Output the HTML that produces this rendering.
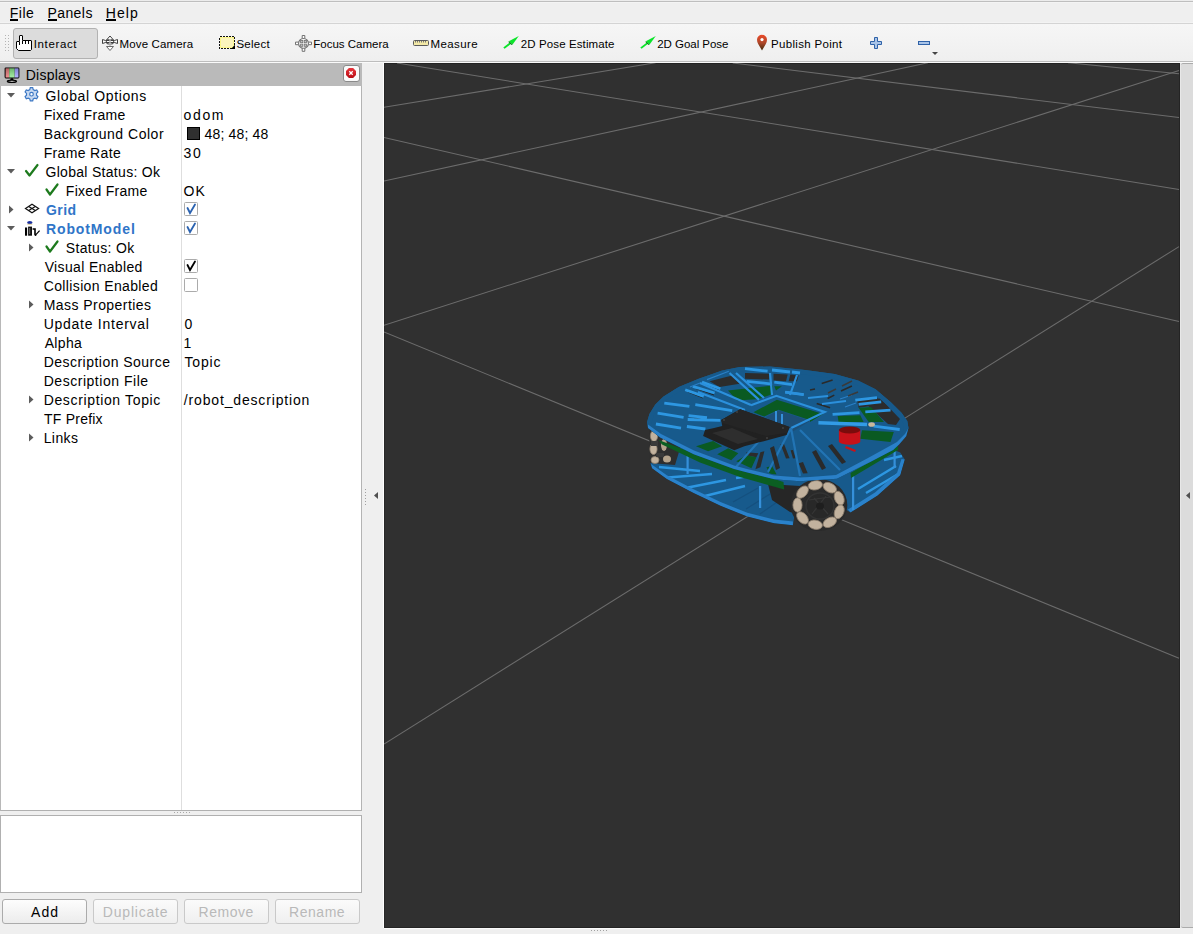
<!DOCTYPE html>
<html><head><meta charset="utf-8"><style>
*{margin:0;padding:0;box-sizing:border-box}
html,body{width:1193px;height:934px;overflow:hidden;background:#efefef;font-family:"Liberation Sans",sans-serif}
.a{position:absolute}
.t{position:absolute;white-space:pre;font-family:"Liberation Sans",sans-serif}
</style></head><body>
<!-- top line -->
<div class=a style="left:0;top:0;width:1193px;height:1px;background:#ececec"></div>
<div class=a style="left:0;top:1px;width:1193px;height:1px;background:#bebebe"></div>
<!-- menu -->
<div class=a style="left:0;top:2px;width:1193px;height:21px;background:#efefef;border-top:1px solid #f4f4f4;border-bottom:1px solid #f3f3f3"></div>
<div class=a style="left:10px;top:19px;width:8px;height:2px;background:#000"></div>
<div class=a style="left:48px;top:19px;width:9px;height:2px;background:#000"></div>
<div class=a style="left:106px;top:19px;width:10px;height:2px;background:#000"></div>
<div class=a style="left:0;top:23px;width:1193px;height:1px;background:#d4d4d4"></div>
<!-- toolbar -->
<div class=a style="left:0;top:24px;width:1193px;height:37px;background:linear-gradient(#f6f6f6,#efefef)"></div>
<div class=a style="left:0;top:61px;width:1193px;height:1px;background:#bdbdbd"></div>
<div class=a style="left:0;top:62px;width:1193px;height:1px;background:#fafafa"></div>
<!-- grip dots -->
<svg class=a style="left:0;top:0" width="20" height="60">
<g fill="#b4b4b4">
<rect x='5' y='35' width='1' height='1'/><rect x='5' y='38' width='1' height='1'/><rect x='5' y='41' width='1' height='1'/><rect x='5' y='44' width='1' height='1'/><rect x='5' y='47' width='1' height='1'/><rect x='5' y='50' width='1' height='1'/><rect x='8' y='35' width='1' height='1'/><rect x='8' y='38' width='1' height='1'/><rect x='8' y='41' width='1' height='1'/><rect x='8' y='44' width='1' height='1'/><rect x='8' y='47' width='1' height='1'/><rect x='8' y='50' width='1' height='1'/>
</g></svg>
<!-- interact button -->
<div class=a style="left:13px;top:28px;width:85px;height:31px;background:#dcdcdc;border:1px solid #b2b2b2;border-radius:3px"></div>
<!-- toolbar icons -->
<svg class=a style="left:0;top:0" width="950" height="60" shape-rendering="crispEdges">
 <!-- hand -->
 <path d="M19.5,41.5 V36 Q19.5,35.5 20,35.5 H22 Q22.5,35.5 22.5,36 V40.5 H31 Q31.5,40.5 31.5,41 V49.5 L30.5,50.5 H18.5 L16.5,48.5 V42 Q16.5,41.5 17,41.5 Z" fill="#fff" stroke="#000" stroke-width="1" shape-rendering="auto"/>
 <path d="M19.5,41.5 V45 M22.5,40.5 V44 M25.5,40.5 V44 M28.5,40.5 V44" stroke="#000" stroke-width="1" fill="none"/>
</svg>
<svg class=a style="left:0;top:0" width="950" height="60">
 <!-- move camera -->
 <g stroke="#404040" stroke-width="1" fill="#fff">
  <path d="M102.5,39.5 L105.5,40.5 L114.5,40.5 L117.5,39.5 L117.5,43.5 L114.5,42.5 L105.5,42.5 L102.5,43.5 Z"/>
  <path d="M110,36 L113.5,40 L106.5,40 Z"/>
  <ellipse cx="110" cy="42" rx="4" ry="2.2" fill="none"/>
 </g>
 <rect x="109.3" y="39" width="1.4" height="9" fill="#b8b8b8"/>
 <path d="M106.5,46.5 L113.5,46.5 L110,50.5 Z" fill="#fff" stroke="#6a6a6a" stroke-width="1"/>
 <!-- select -->
 <rect x="219.5" y="36.5" width="15" height="12" fill="#fbf4bc" stroke="#fafafa" stroke-width="1"/>
 <rect x="220.5" y="37.5" width="13" height="10" fill="#fbf4bc" stroke="#fcf78a" stroke-width="1"/>
 <rect x="219.5" y="36.5" width="15" height="12" fill="none" stroke="#111" stroke-width="1.1" stroke-dasharray="2 1" shape-rendering="crispEdges"/>
 <path d="M235,44.8 L235,49 L231,49 Z" fill="#000"/>
 <!-- focus camera -->
 <path d="M302.2,38.8 V35.5 H304.8 V38.8 M302.2,48 V51.3 H304.8 V48 M298.8,42.1 H295.5 V44.7 H298.8 M308.2,42.1 H311.5 V44.7 H308.2" fill="#fff" stroke="#707070" stroke-width="1"/>
 <circle cx="303.5" cy="43.4" r="4.9" fill="#fff" stroke="#707070" stroke-width="1.1"/>
 <g fill="#c4c4c4" stroke="#707070" stroke-width="0.8">
  <rect x="300.6" y="40.5" width="2.2" height="2.2"/><rect x="304.2" y="40.5" width="2.2" height="2.2"/>
  <rect x="300.6" y="44.1" width="2.2" height="2.2"/><rect x="304.2" y="44.1" width="2.2" height="2.2"/>
 </g>
 <!-- ruler -->
 <rect x="413.5" y="40.5" width="15" height="5" rx="1" fill="#f3e9a6" stroke="#5a5a5a" stroke-width="1"/>
 <path d="M415.5,41 V42.5 M417.5,41 V42.5 M419.5,41 V42.5 M421.5,41 V42.5 M423.5,41 V42.5 M425.5,41 V42.5" stroke="#777" stroke-width="1"/>
 <!-- pose arrows -->
 <g fill="#0be52a">
  <path d="M518.8,36 L508.8,41.2 L512.6,44.6 Z"/>
  <path d="M510.2,42.2 L503.3,47.4 L504.6,48.8 L511.4,43.6 Z"/>
  <path d="M655.8,36 L645.8,41.2 L649.6,44.6 Z"/>
  <path d="M647.2,42.2 L640.3,47.4 L641.6,48.8 L648.4,43.6 Z"/>
 </g>
 <path d="M508.8,41.2 L512.6,44.6 L511.6,45 L508.4,42 Z M645.8,41.2 L649.6,44.6 L648.6,45 L645.4,42 Z" fill="#087a18"/>
 <!-- pin -->
 <defs><linearGradient id="pg" x1="0" y1="0" x2="0" y2="1"><stop offset="0" stop-color="#ea4a2a"/><stop offset="0.5" stop-color="#b0482a"/><stop offset="1" stop-color="#3e2a0c"/></linearGradient></defs>
 <path d="M762,50.5 L758.2,44 Q757,42 757,39.8 A5,5 0 0 1 767,39.8 Q767,42 765.8,44 Z" fill="url(#pg)"/>
 <circle cx="762" cy="39.6" r="1.6" fill="#fff"/>
 <!-- plus / minus -->
 <path d="M874.5,37.5 h3 v4 h4 v3 h-4 v4 h-3 v-4 h-4 v-3 h4 z" fill="#a9c4e8" stroke="#2f62a8" stroke-width="1"/>
 <rect x="918.5" y="41.5" width="11" height="3" fill="#a9c4e8" stroke="#2f62a8" stroke-width="1"/>
 <path d="M932,52 h6 l-3,3 z" fill="#444"/>
</svg>

<!-- Displays panel header -->
<div class=a style="left:0;top:63px;width:362px;height:23px;background:#bababa"></div>
<svg class=a style="left:0;top:60px" width="362" height="30">
 <defs>
  <linearGradient id="mr" x1="0" y1="0" x2="0" y2="1"><stop offset="0" stop-color="#b36262"/><stop offset="1" stop-color="#ee9292"/></linearGradient>
  <linearGradient id="mgr" x1="0" y1="0" x2="0" y2="1"><stop offset="0" stop-color="#6cb46c"/><stop offset="1" stop-color="#a6eea6"/></linearGradient>
  <linearGradient id="mb" x1="0" y1="0" x2="0" y2="1"><stop offset="0" stop-color="#7e7ed0"/><stop offset="1" stop-color="#b6b6ff"/></linearGradient>
 </defs>
 <rect x="4.6" y="7.4" width="14.8" height="11" rx="1.3" fill="#000"/>
 <rect x="5.6" y="8.3" width="3.6" height="9.2" fill="url(#mr)"/>
 <rect x="9.2" y="8.3" width="5.5" height="9.2" fill="url(#mgr)"/>
 <rect x="14.7" y="8.3" width="3.8" height="9.2" fill="url(#mb)"/>
 <path d="M10.8,18.3 h2.2 l0.6,1.6 h-3.4 z" fill="#000"/>
 <ellipse cx="11.9" cy="21.3" rx="4.6" ry="1.2" fill="none" stroke="#000" stroke-width="1.2"/>
 <path d="M7.3,21.8 q4.6,1.6 9.2,0" stroke="#000" stroke-width="1" fill="none"/>
 <rect x="343.5" y="5.5" width="16" height="16" rx="2.5" fill="#fafafa" stroke="#8a8a8a" stroke-width="1"/>
 <defs><linearGradient id="rg" x1="0" y1="0" x2="0" y2="1"><stop offset="0" stop-color="#e8353c"/><stop offset="1" stop-color="#b80c14"/></linearGradient></defs>
 <path d="M348.9,8 h4.2 l2.9,2.9 v4.2 l-2.9,2.9 h-4.2 l-2.9,-2.9 v-4.2 z" fill="url(#rg)"/>
 <path d="M349.3,11.3 l3.4,3.4 M352.7,11.3 l-3.4,3.4" stroke="#fff" stroke-width="1.3"/>
</svg>
<!-- tree -->
<div class=a style="left:0;top:86px;width:362px;height:725px;background:#fff;border-left:1px solid #b8b8b8;border-right:1px solid #b4b4b4;border-bottom:1px solid #b0b0b0"></div>
<div class=a style="left:181px;top:86px;width:1px;height:724px;background:#dedede"></div>
<!-- splitter dots -->
<svg class=a style="left:0;top:800px" width="362" height="20"><g fill="#a8a8a8"><rect x='174' y='12' width='1' height='1'/><rect x='177' y='12' width='1' height='1'/><rect x='180' y='12' width='1' height='1'/><rect x='183' y='12' width='1' height='1'/><rect x='186' y='12' width='1' height='1'/><rect x='189' y='12' width='1' height='1'/></g></svg>
<!-- text box -->
<div class=a style="left:0;top:815px;width:362px;height:78px;background:#fff;border:1px solid #b0b0b0"></div>
<!-- buttons -->
<div class=a style="left:2px;top:899px;width:85px;height:25px;border:1px solid #ababab;border-radius:3px;background:linear-gradient(#fdfdfd,#ececec)"></div>
<div class=a style="left:93px;top:899px;width:85px;height:25px;border:1px solid #c9c9c9;border-radius:3px;background:linear-gradient(#fbfbfb,#efefef)"></div>
<div class=a style="left:184px;top:899px;width:85px;height:25px;border:1px solid #c9c9c9;border-radius:3px;background:linear-gradient(#fbfbfb,#efefef)"></div>
<div class=a style="left:275px;top:899px;width:85px;height:25px;border:1px solid #c9c9c9;border-radius:3px;background:linear-gradient(#fbfbfb,#efefef)"></div>

<!-- tree icons -->
<svg class=a style="left:0;top:0" width="362" height="460">
 <g fill="#5c5c5c">
  <path d="M7,93 h8 l-4,4.5z"/>
  <path d="M7,169 h8 l-4,4.5z"/>
  <path d="M7,226 h8 l-4,4.5z"/>
  <path d="M9,205.5 v8 l4.5,-4z"/>
  <path d="M29,243.5 v8 l4.5,-4z"/>
  <path d="M29,300.5 v8 l4.5,-4z"/>
  <path d="M29,395.5 v8 l4.5,-4z"/>
  <path d="M29,433.5 v8 l4.5,-4z"/>
 </g>
 <!-- gear -->
 <g transform="translate(31.5,94.2)">
  <path d="M-1.2,-6.5 h2.4 l0.5,1.9 l1.6,0.9 l1.9,-0.6 l1.2,2.1 l-1.4,1.4 v1.8 l1.4,1.4 l-1.2,2.1 l-1.9,-0.6 l-1.6,0.9 l-0.5,1.9 h-2.4 l-0.5,-1.9 l-1.6,-0.9 l-1.9,0.6 l-1.2,-2.1 l1.4,-1.4 v-1.8 l-1.4,-1.4 l1.2,-2.1 l1.9,0.6 l1.6,-0.9 z" fill="#c8daf2" stroke="#3d78c4" stroke-width="1.2"/>
  <circle r="1.8" fill="#fff" stroke="#3d78c4" stroke-width="1.2"/>
 </g>
 <!-- checks -->
 <g fill="none" stroke="#1d7a1d" stroke-width="2.2" stroke-linecap="round" stroke-linejoin="round">
  <path d="M26,171 L29.5,175.5 L37.5,165"/>
  <path d="M46.5,189.5 L50,194.5 L57.5,184.5"/>
  <path d="M46.5,246.5 L50,251.5 L57.5,241.5"/>
 </g>
 <!-- grid icon -->
 <g fill="none" stroke="#111" stroke-width="1.2">
  <path d="M25.5,208.5 L32,204.3 L38.6,208.5 L32,212.7 Z"/>
  <path d="M28.7,206.4 L35.3,210.6 M35.3,206.4 L28.7,210.6"/>
 </g>
 <!-- robot icon -->
 <ellipse cx="29.8" cy="222.6" rx="2.7" ry="1.7" fill="#1a2fa0"/>
 <rect x="27.3" y="223.8" width="5" height="0.9" fill="#e0d090"/>
 <rect x="25" y="227.5" width="2.1" height="8.2" fill="#000"/>
 <rect x="28.1" y="226.6" width="3.9" height="9.1" fill="#111"/>
 <rect x="29.2" y="228" width="1" height="6" fill="#777"/>
 <path d="M32.6,229 h2.4 v5 q0,1.4 1.2,1.2" fill="none" stroke="#000" stroke-width="1.6"/>
 <path d="M35.2,235.4 L39.6,230.6" stroke="#000" stroke-width="1.2"/>
 <!-- checkboxes -->
 <g fill="#fff" stroke="#ababab" stroke-width="1">
  <rect x="184.5" y="202.5" width="13" height="13" rx="1"/>
  <rect x="184.5" y="221.5" width="13" height="13" rx="1"/>
  <rect x="184.5" y="259.5" width="13" height="13" rx="1"/>
  <rect x="184.5" y="278.5" width="13" height="13" rx="1"/>
 </g>
 <g fill="none" stroke-width="1.8" stroke-linecap="round">
  <path d="M187.5,208 L190,213 L195,204.5" stroke="#2a62b0"/>
  <path d="M187.5,227 L190,232 L195,223.5" stroke="#2a62b0"/>
  <path d="M187.5,265 L190,270 L195,261.5" stroke="#000"/>
 </g>
 <!-- color swatch -->
 <rect x="187.5" y="127.5" width="12" height="12" fill="#303030" stroke="#000" stroke-width="1"/>
</svg>

<!-- splitters -->
<svg class=a style="left:356px;top:480px" width="34" height="30">
 <g fill="#a0a0a0"><rect x='9' y='9' width='1' height='1'/><rect x='9' y='12' width='1' height='1'/><rect x='9' y='15' width='1' height='1'/><rect x='9' y='18' width='1' height='1'/><rect x='9' y='21' width='1' height='1'/><rect x='9' y='24' width='1' height='1'/></g>
 <path d="M18,15.5 L22,12 L22,19 Z" fill="#505050"/>
</svg>
<div class=a style="left:383px;top:63px;width:1px;height:865px;background:#fff"></div>
<!-- 3D view -->
<div class=a style="left:384px;top:63px;width:796px;height:865px;background:#303030;overflow:hidden">
 <div class=a style="left:0;top:0;width:796px;height:1px;background:#242424"></div>
 <div class=a style="left:0;top:864px;width:796px;height:1px;background:#242424"></div>
 <div class=a style="left:795px;top:0;width:1px;height:865px;background:#242424"></div>
 <div class=a style="left:0;top:0;width:1px;height:865px;background:#282828"></div>
 <svg class=a style="left:0;top:0" width="796" height="865"><g stroke="#6c6c6c" stroke-width="1.05"><line x1='13' y1='0' x2='795' y2='126.4'/><line x1='0' y1='74.4' x2='795' y2='258.4'/><line x1='0' y1='269' x2='795' y2='595.2'/><line x1='348.70000000000005' y1='0' x2='795' y2='54.599999999999994'/><line x1='684' y1='-0.29999999999999716' x2='795' y2='10.799999999999997'/><line x1='0' y1='44.3' x2='271.6' y2='-0.29999999999999716'/><line x1='0' y1='118' x2='544' y2='-0.29999999999999716'/><line x1='0' y1='262.2' x2='795' y2='7.400000000000006'/><line x1='0' y1='681' x2='795' y2='183.6'/></g></svg>
 <svg class=a style="left:0;top:0" width="796" height="865"><g transform="translate(-384,-63)"><defs>
 <clipPath id="topclip"><path d="M647,422.2 L649.4,414 L655.3,404.6 L663.5,396.4 L678.7,387 L698.7,378.8 L722.2,370.6 L739.8,367 L770,366.5 L805.2,370 L834.6,374.1 L858,380.5 L875.6,389.3 L890.9,402.3 L901.5,412.8 L907.3,421 L908.5,428 L906.2,436.3 L899.1,444.5 L893.2,450 L870.8,461.7 L836.9,478.7 L810,480.4 L800,481.2 L774.1,479.2 L746.3,472.3 L733.9,469 L693.6,454.2 L660.1,437.4 L648,428 Z"/></clipPath>
 <clipPath id="lowclip"><path d="M650,462 L652,468.3 L666.8,479 L693.6,493.1 L720.5,505.8 L747.3,516.6 L774.1,523.3 L792.9,525.3 L795,512 L845,509 L850.5,512.6 L877.6,495.6 L900.2,475.3 L904.8,459.4 L900.2,452.6 L870,440 L790,440 L700,430 L655,440 Z"/></clipPath>
</defs>
<!-- lower plate -->
<g clip-path="url(#lowclip)">
 <rect x="640" y="420" width="280" height="110" fill="#175a8c"/>
 <g stroke="#2d97e2" stroke-width="2.4">
  <path d="M659,467 L700,471 M668,477.5 L712,474 M688,487.5 L726,480 M705,496 L745,486 M736,478 L770,473"/>
  <path d="M858,489 L896,466 M866,493 L900,473 M884,460 L902,456"/>
 </g>
 <g stroke="#15507f" stroke-width="1.2">
  <path d="M733,502 L758,488 M746,509 L770,494 M760,514 L780,500"/>
 </g>
 <path d="M652,468.3 L666.8,479 L693.6,493.1 L720.5,505.8 L747.3,516.6 L774.1,523.3 L792.9,525.3 L792.9,521.5 L774.1,519.5 L747.3,512.8 L720.5,502 L693.6,489.3 L666.8,475.2 L651,464 Z" fill="#2a82cb"/>
 <path d="M850.5,512.6 L877.6,495.6 L900.2,475.3 L904.8,459.4 L901.5,459 L897,473 L875,492.5 L848,509.5 Z" fill="#2a82cb"/>
 <path d="M768,484 L800,486 L812,482 L800,515 L790,512 L772,500 Z" fill="#262626"/>
</g>
<!-- standoffs -->
<g fill="#3590da">
 <rect x="686.5" y="452" width="2.2" height="22"/>
 <rect x="759" y="486" width="2.2" height="22"/>
 <rect x="852" y="476" width="2.2" height="34"/>
 <rect x="893.5" y="448" width="2.2" height="20"/>
</g>
<!-- left wheel -->
<g>
 <path d="M649,428 L650,463 L675,465 L682,442 Z" fill="#2e2e2e"/>
 <ellipse cx="654" cy="436" rx="3.6" ry="5.5" fill="#c2b29e" stroke="#8d7f6e" stroke-width="0.8"/>
 <ellipse cx="653.5" cy="449" rx="3.6" ry="5.5" fill="#c2b29e" stroke="#8d7f6e" stroke-width="0.8"/>
 <ellipse cx="655" cy="460" rx="4" ry="3.5" fill="#c2b29e" stroke="#8d7f6e" stroke-width="0.8"/>
 <ellipse cx="664" cy="445" rx="3" ry="6" fill="#b4a38c"/>
 <ellipse cx="667" cy="459" rx="4" ry="3.5" fill="#b4a38c"/>
 <rect x="651" y="441" width="7" height="5" fill="#3a3a3a"/>
 <rect x="656" y="453" width="8" height="4" fill="#3a3a3a"/>
</g>
<!-- green strip -->
<path d="M658.6,440 L700,455.5 L740,468 L783.5,482 L784.2,489.4 L740,477 L700,462.5 L662,444.5 Z" fill="#0b5e22"/>
<path d="M850.5,473 L898,445.8 L898,450 L851,478 Z" fill="#0b5e22"/>
<!-- front wheel -->
<g>
 <ellipse cx="819" cy="505" rx="28.3" ry="26" fill="#2a2a2a"/>
 <ellipse cx="815.3" cy="485.3" rx="7.2" ry="4.6" transform="rotate(-9.3 815.3 485.3)" fill="#c2b29e" stroke="#8d7f6e" stroke-width="0.8"/>
 <ellipse cx="829.8" cy="487.7" rx="7.2" ry="4.6" transform="rotate(28.2 829.8 487.7)" fill="#c2b29e" stroke="#8d7f6e" stroke-width="0.8"/>
 <ellipse cx="839.2" cy="498.2" rx="7.2" ry="4.6" transform="rotate(68.6 839.2 498.2)" fill="#c2b29e" stroke="#8d7f6e" stroke-width="0.8"/>
 <ellipse cx="839.2" cy="511.8" rx="7.2" ry="4.6" transform="rotate(111.4 839.2 511.8)" fill="#c2b29e" stroke="#8d7f6e" stroke-width="0.8"/>
 <ellipse cx="829.8" cy="522.3" rx="7.2" ry="4.6" transform="rotate(151.8 829.8 522.3)" fill="#c2b29e" stroke="#8d7f6e" stroke-width="0.8"/>
 <ellipse cx="815.3" cy="524.7" rx="7.2" ry="4.6" transform="rotate(-170.7 815.3 524.7)" fill="#c2b29e" stroke="#8d7f6e" stroke-width="0.8"/>
 <ellipse cx="802.5" cy="517.9" rx="7.2" ry="4.6" transform="rotate(-132.1 802.5 517.9)" fill="#c2b29e" stroke="#8d7f6e" stroke-width="0.8"/>
 <ellipse cx="797.5" cy="505.0" rx="7.2" ry="4.6" transform="rotate(-90.0 797.5 505.0)" fill="#c2b29e" stroke="#8d7f6e" stroke-width="0.8"/>
 <ellipse cx="802.5" cy="492.1" rx="7.2" ry="4.6" transform="rotate(-47.9 802.5 492.1)" fill="#c2b29e" stroke="#8d7f6e" stroke-width="0.8"/>
 <ellipse cx="820" cy="506" rx="14" ry="13" fill="#282828" stroke="#333" stroke-width="1.5"/>
 <path d="M809,500 L830,497 M812,514 L826,496 M814,498 L828,514" stroke="#363636" stroke-width="1.2"/>
 <ellipse cx="820" cy="506" rx="4" ry="3.6" fill="#1e1e1e"/>
</g>
<!-- top plate -->
<g clip-path="url(#topclip)">
 <rect x="640" y="360" width="280" height="130" fill="#175a8c"/>
 <g fill="#2c2c2c">
  <path d="M709.5,381.3 L732.2,375.4 L739.7,383.8 L719.6,387.1 Z"/>
  <path d="M745,373 L769.3,373.7 L769.3,379.6 L745,378.8 Z"/>
  <path d="M773.5,373.7 L787.7,374.6 L786,381.3 L773.5,380.4 Z"/>
  <path d="M790.3,374.6 L798.6,375.4 L797,381.3 L788.6,381.3 Z"/>
  <path d="M766,417 L779,410.5 L810,421 L792,432 L780,430 Z" fill="#1d4f78"/>
  <path d="M866,404 L880,398 L900,419 L896,425 L888,424 Z"/>
  <path d="M857,400 L877,397.6 L883,404.3 L858.6,407.7 Z"/>
  <path d="M746.3,452.2 L758.4,453.2 L756.4,457.2 L746.3,455.2 Z"/>
  <path d="M760.4,452.2 L764.4,451.2 L760.4,467.3 L755.4,469.3 Z"/>
  <path d="M780.5,444.1 L784,444 L789.6,458.2 L786,458.5 Z"/>
  <path d="M790.6,450.2 L793,450 L795.6,458.2 L793,458.5 Z"/>
  <path d="M798.7,463.3 L803,462 L807.7,473.3 L803,473.5 Z"/>
  <path d="M694,418 L706,418 L706,420 L694,420 Z"/>
 </g>
 <g stroke="#2a2a2a" stroke-width="1.6">
  <path d="M821.7,383.4 L832.6,380 M841,390.9 L851.9,385.9 M827.6,398.5 L834.3,395.1 M816.7,403.5 L830.1,407.7 M810,390 L815,389"/>
  <path d="M688,392 L703,398 M696,388.5 L714,395 M705,384.5 L720,390.5" stroke-width="1" stroke="#262626"/>
 </g>
 <g fill="#0a5a22">
  <path d="M728,390.5 L772.7,385.5 L772.7,393.9 L759.2,398.9 L737.2,400.5 Z"/>
  <path d="M774.3,386.3 L781.9,386.3 L776,390.5 Z"/>
  <path d="M753.4,412.3 L776.9,399.7 L823,414 L812,420.7 L778.5,409.8 L764.3,416.5 Z"/>
  <path d="M858.6,407.7 L871,406.9 L884,422 L868.7,422 Z"/>
  <path d="M862,430.3 L893.8,432 L890.5,442 L860.3,438.7 Z"/>
  <path d="M810,410.2 L820,415.2 L810,422 Z"/>
  <path d="M837.7,416.1 L860.3,415.2 L863.6,422 L838.5,422 Z"/>
  <path d="M696,446.2 L713.1,441.1 L722.2,446.2 L708.1,451.2 Z"/>
  <path d="M717.2,454.2 L728.2,448.2 L738.3,453.2 L731.2,460.2 Z"/>
  <path d="M736.3,461.2 L746.3,455.2 L756.4,457.2 L751.4,468.3 Z"/>
  <path d="M766.5,467.3 L772,466 L776.5,474.3 L770,474.5 Z"/>
 </g>
 <!-- standoffs in hub -->
 <g fill="#3590da">
  <rect x="775" y="411" width="2" height="14"/>
  <rect x="781" y="414" width="2" height="14"/>
 </g>
 <!-- outer rim band -->
 <path d="M647,422.2 L649.4,414 L655.3,404.6 L663.5,396.4 L678.7,387 L698.7,378.8 L722.2,370.6 L739.8,367 L770,366.5 L805.2,370 L834.6,374.1 L858,380.5 L875.6,389.3 L890.9,402.3 L901.5,412.8 L907.3,421 L908.5,428 L906.2,436.3 L899.1,444.5 L893.2,450 L870.8,461.7 L836.9,478.7 L810,480.4 L800,481.2 L774.1,479.2 L746.3,472.3 L733.9,469 L693.6,454.2 L660.1,437.4 L648,428 Z" fill="none" stroke="#175a8c" stroke-width="9"/>
 <!-- light slats -->
 <g stroke="#2d97e2" stroke-width="2.8">
  <path d="M664.3,403.1 L689.4,406.4 M695.3,404.7 L732.2,410.6 M657.6,413.1 L683.6,417.3 M688.6,415.6 L707,417.7 M687.7,419.5 L720.4,420.3 M655.9,424 L681,428.2 M686.9,426.5 L705.4,429"/>
  <path d="M685.2,389.7 L703.7,396.4 M692.8,386.3 L714.6,393 M702,382.1 L720.4,388.8"/>
  <path d="M745,368.7 L767.6,371.2 M772,370 L790,372 M792,372 L800,373 M746.7,381.3 L770.1,383.8 M774.3,382.1 L792,384.6 M785.2,392.2 L803.7,394.7"/>
  <path d="M855.3,400.1 L877,397.6 M858.6,404.3 L881.2,401.8 M865.3,411.9 L890.5,410.2 M832.6,414.4 L859.5,412.7 M873.7,426.1 L899.7,429.5"/>
 </g>
 <path d="M818.4,422.8 L867,424.5" stroke="#329be6" stroke-width="3.5"/>
 <g stroke="#2a7fc6" stroke-width="1.2">
  <path d="M707,379.6 L728.8,371.2 M700,383 L690,387 M840,399 L852,395 M845,407 L856,403"/>
 </g>
 <!-- spokes / extra bright bars -->
 <g stroke="#2b90dc" stroke-width="2.2" fill="none">
  <path d="M729.5,373 L759,399.9 M736,373 L764,398 M770,373 L772,395 M797,375 L790,395"/>
  <path d="M700,383 L751,405 M698,392 L745,410"/>
  <path d="M751,405.2 L776.4,395.8 L824.7,412 L791.2,428"/>
  <path d="M785.2,392.2 L803.7,394.7 M808,398 L828,396 M822,404 L846,401"/>
  <path d="M791,428 L768,472 M791,428 L800,476 M800,430 L840,470 M760,440 L735,468" stroke="#2274b4"/>
 </g>
 <g fill="#2a2a2a">
  <path d="M770,448 L774,446 L780,468 L776,470 Z"/>
  <path d="M812,452 L816,450 L826,468 L822,470 Z"/>
  <path d="M828,446 L832,444 L846,462 L842,464 Z"/>
 </g>
 <g stroke="#3a3a3a" stroke-width="1.4">
  <path d="M842,386 L852,381 M828,393 L836,389 M848,396 L858,392"/>
 </g>
 <!-- front face band -->
 <path d="M648,428 L660.1,437.4 L693.6,454.2 L733.9,469 L746.3,472.3 L774.1,479.2 L800,481.2 L810,480.4 L836.9,478.7 L870.8,461.7 L893.2,450 L899.1,444.5 L906.2,436.3 L908.5,428 L905,434 L897,442 L868,458 L836,475 L810,477 L800,477.5 L774,475.5 L746,468.7 L734,465.5 L694,450.5 L661,434 L648,424.5 Z" fill="#2a80c8"/>
</g>
<!-- black board -->
<path d="M721.2,420 L740.2,409.3 L789.6,427 L786.6,435.1 L760.4,442.1 L744.3,446.2 L734.3,450.2 L703.1,436.1 L705,430 L714.1,428 L722.2,426 Z" fill="#212121"/>
<path d="M721.2,420 L740.2,409.3 L789.6,427 L786.6,433 L766,436 L722.2,423 Z" fill="#252525"/>
<path d="M712,433 L738,444 L758,439 L732,428 Z" fill="#2e2e2e"/>
<g fill="#555"><circle cx="737" cy="412" r="0.8"/><circle cx="724" cy="420" r="0.8"/><circle cx="783" cy="428" r="0.8"/><circle cx="767" cy="438" r="0.8"/></g>
<!-- red button -->
<path d="M838.9,430 L838.9,441.5 A10.7,3.2 0 0 0 860.3,441.5 L860.3,430 Z" fill="#c8121a"/>
<ellipse cx="849.6" cy="430" rx="10.7" ry="3.5" fill="#7a0c0c"/>
<path d="M846,446 L856,450 L855,452 L845,448 Z" fill="#c8121a"/>
<ellipse cx="871.6" cy="424.5" rx="3.3" ry="2.3" fill="#c8b89c"/>
</g></svg>
</div>
<div class=a style="left:1180px;top:63px;width:1px;height:865px;background:#e8e8e8"></div>
<div class=a style="left:1181px;top:63px;width:12px;height:865px;background:#dcdcdc;border-top:1px solid #ababab;border-bottom:1px solid #ababab;border-top-left-radius:2px;border-bottom-left-radius:2px"></div>
<svg class=a style="left:1180px;top:480px" width="13" height="30"><path d="M6,15.5 L10,12 L10,19 Z" fill="#505050"/></svg>
<div class=a style="left:384px;top:928px;width:796px;height:1px;background:#fafafa"></div>
<svg class=a style="left:580px;top:925px" width="40" height="9"><g fill="#a0a0a0"><rect x='11' y='5' width='1' height='1'/><rect x='14' y='5' width='1' height='1'/><rect x='17' y='5' width='1' height='1'/><rect x='20' y='5' width='1' height='1'/><rect x='23' y='5' width='1' height='1'/><rect x='26' y='5' width='1' height='1'/></g></svg>

<div class=t style="left:9.70px;top:3.15px;font-size:14px;line-height:20px;letter-spacing:0.533px;color:#000;">File</div>
<div class=t style="left:47.40px;top:3.15px;font-size:14px;line-height:20px;letter-spacing:0.44px;color:#000;">Panels</div>
<div class=t style="left:105.70px;top:3.15px;font-size:14px;line-height:20px;letter-spacing:1.133px;color:#000;">Help</div>
<div class=t style="left:33.80px;top:34.02px;font-size:11.5px;line-height:20px;letter-spacing:0.614px;color:#000;">Interact</div>
<div class=t style="left:119.60px;top:34.02px;font-size:11.5px;line-height:20px;letter-spacing:0.14px;color:#000;">Move Camera</div>
<div class=t style="left:236.40px;top:34.02px;font-size:11.5px;line-height:20px;letter-spacing:0.26px;color:#000;">Select</div>
<div class=t style="left:313.30px;top:34.02px;font-size:11.5px;line-height:20px;letter-spacing:0.0px;color:#000;">Focus Camera</div>
<div class=t style="left:430.40px;top:34.02px;font-size:11.5px;line-height:20px;letter-spacing:0.433px;color:#000;">Measure</div>
<div class=t style="left:520.80px;top:34.02px;font-size:11.5px;line-height:20px;letter-spacing:0.107px;color:#000;">2D Pose Estimate</div>
<div class=t style="left:657.20px;top:34.02px;font-size:11.5px;line-height:20px;letter-spacing:-0.027px;color:#000;">2D Goal Pose</div>
<div class=t style="left:771.00px;top:34.02px;font-size:11.5px;line-height:20px;letter-spacing:0.325px;color:#000;">Publish Point</div>
<div class=t style="left:25.70px;top:65.15px;font-size:14px;line-height:20px;letter-spacing:0.243px;color:#000;">Displays</div>
<div class=t style="left:45.50px;top:86.15px;font-size:14px;line-height:20px;letter-spacing:0.623px;color:#000;">Global Options</div>
<div class=t style="left:43.70px;top:105.15px;font-size:14px;line-height:20px;letter-spacing:0.3px;color:#000;">Fixed Frame</div>
<div class=t style="left:43.70px;top:124.15px;font-size:14px;line-height:20px;letter-spacing:0.52px;color:#000;">Background Color</div>
<div class=t style="left:43.70px;top:143.15px;font-size:14px;line-height:20px;letter-spacing:0.344px;color:#000;">Frame Rate</div>
<div class=t style="left:45.50px;top:162.15px;font-size:14px;line-height:20px;letter-spacing:0.3px;color:#000;">Global Status: Ok</div>
<div class=t style="left:65.80px;top:181.15px;font-size:14px;line-height:20px;letter-spacing:0.3px;color:#000;">Fixed Frame</div>
<div class=t style="left:46.00px;top:200.15px;font-size:14px;line-height:20px;letter-spacing:0.4px;color:#2f75c8;font-weight:bold;">Grid</div>
<div class=t style="left:46.00px;top:219.15px;font-size:14px;line-height:20px;letter-spacing:0.878px;color:#2f75c8;font-weight:bold;">RobotModel</div>
<div class=t style="left:65.80px;top:238.15px;font-size:14px;line-height:20px;letter-spacing:0.344px;color:#000;">Status: Ok</div>
<div class=t style="left:44.70px;top:257.15px;font-size:14px;line-height:20px;letter-spacing:0.346px;color:#000;">Visual Enabled</div>
<div class=t style="left:43.70px;top:276.15px;font-size:14px;line-height:20px;letter-spacing:0.369px;color:#000;">Collision Enabled</div>
<div class=t style="left:43.70px;top:295.15px;font-size:14px;line-height:20px;letter-spacing:0.443px;color:#000;">Mass Properties</div>
<div class=t style="left:43.70px;top:314.15px;font-size:14px;line-height:20px;letter-spacing:0.736px;color:#000;">Update Interval</div>
<div class=t style="left:44.70px;top:333.15px;font-size:14px;line-height:20px;letter-spacing:0.325px;color:#000;">Alpha</div>
<div class=t style="left:43.70px;top:352.15px;font-size:14px;line-height:20px;letter-spacing:0.471px;color:#000;">Description Source</div>
<div class=t style="left:43.70px;top:371.15px;font-size:14px;line-height:20px;letter-spacing:0.533px;color:#000;">Description File</div>
<div class=t style="left:43.70px;top:390.15px;font-size:14px;line-height:20px;letter-spacing:0.644px;color:#000;">Description Topic</div>
<div class=t style="left:44.10px;top:409.15px;font-size:14px;line-height:20px;letter-spacing:0.213px;color:#000;">TF Prefix</div>
<div class=t style="left:43.70px;top:428.15px;font-size:14px;line-height:20px;letter-spacing:0.4px;color:#000;">Links</div>
<div class=t style="left:183.50px;top:105.15px;font-size:14px;line-height:20px;letter-spacing:1.667px;color:#000;">odom</div>
<div class=t style="left:204.60px;top:124.15px;font-size:14px;line-height:20px;letter-spacing:0.156px;color:#000;">48; 48; 48</div>
<div class=t style="left:183.50px;top:143.15px;font-size:14px;line-height:20px;letter-spacing:1.7px;color:#000;">30</div>
<div class=t style="left:183.50px;top:181.15px;font-size:14px;line-height:20px;letter-spacing:1.0px;color:#000;">OK</div>
<div class=t style="left:184.50px;top:314.15px;font-size:14px;line-height:20px;letter-spacing:0.2px;color:#000;">0</div>
<div class=t style="left:183.50px;top:333.15px;font-size:14px;line-height:20px;letter-spacing:0.1px;color:#000;">1</div>
<div class=t style="left:184.50px;top:352.15px;font-size:14px;line-height:20px;letter-spacing:0.8px;color:#000;">Topic</div>
<div class=t style="left:183.80px;top:390.15px;font-size:14px;line-height:20px;letter-spacing:0.841px;color:#000;">/robot_description</div>
<div class=t style="left:30.90px;top:902.15px;font-size:14px;line-height:20px;letter-spacing:1.15px;color:#000;">Add</div>
<div class=t style="left:102.80px;top:902.15px;font-size:14px;line-height:20px;letter-spacing:0.8px;color:#b9b9b9;">Duplicate</div>
<div class=t style="left:198.50px;top:902.15px;font-size:14px;line-height:20px;letter-spacing:0.54px;color:#b9b9b9;">Remove</div>
<div class=t style="left:289.10px;top:902.15px;font-size:14px;line-height:20px;letter-spacing:0.52px;color:#b9b9b9;">Rename</div>
</body></html>
